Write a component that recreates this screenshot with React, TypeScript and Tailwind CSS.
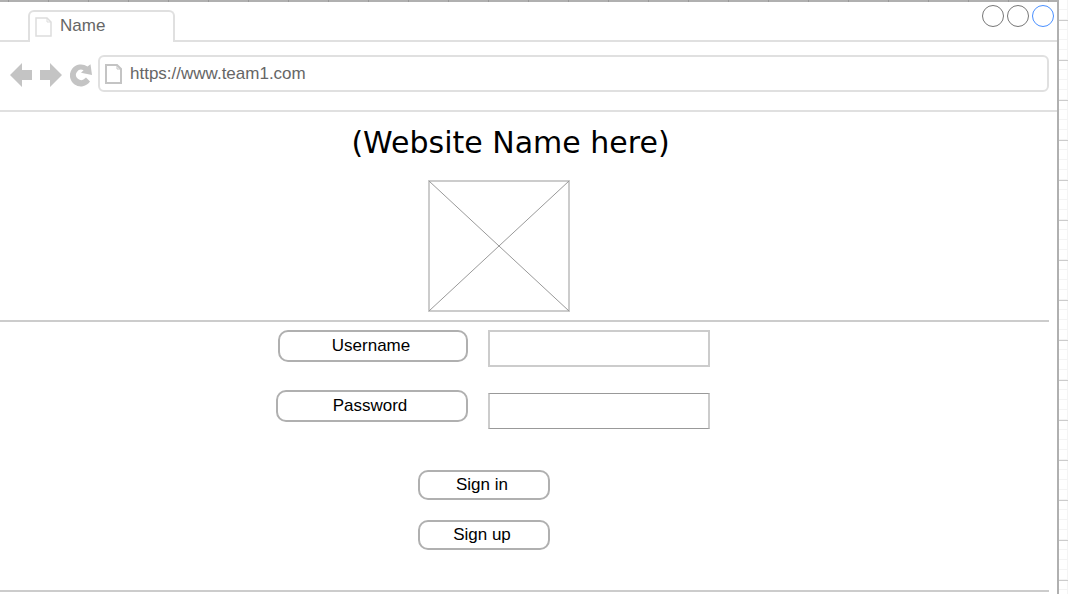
import React from "react";

function PageIcon({ className, strokeWidth }: { className: string; strokeWidth: number }) {
  return (
    <svg className={className} viewBox="0 0 17 20" fill="none" stroke="currentColor" strokeWidth={strokeWidth} aria-hidden="true">
      <path d="M1 1H12L16 5V19H1Z" />
      <path d="M12 1V5H16" strokeWidth="1" />
    </svg>
  );
}

function ArrowIcon({ className = "" }: { className?: string }) {
  return (
    <svg className={className} width="22" height="24" viewBox="0 0 22 24" fill="currentColor" aria-hidden="true">
      <path d="M0 12L12 0V7H22V17H12V24Z" />
    </svg>
  );
}

function ReloadIcon() {
  return (
    <svg width="22" height="24" viewBox="0 0 22 24" fill="currentColor" aria-hidden="true">
      <path d="M17.5 3.6L20.5 1.2L22 12L11 9.8L13.6 7.2A5.2 5.2 0 1 0 14.8 15.6L16 14.4L20 18.6A11 11 0 1 1 17.5 3.6Z" />
    </svg>
  );
}

const windowButtons = [
  { label: "Minimize", border: "border-[#777777]" },
  { label: "Maximize", border: "border-[#777777]" },
  { label: "Close", border: "border-[#4a90ff]" },
];

const labelStyle =
  "flex h-8 items-center justify-center rounded-[10px] border-2 border-[#b0b0b0] pr-1 text-[17px] leading-5 text-black";
const buttonStyle =
  "flex h-[30px] w-33 items-center justify-center rounded-[10px] border-2 border-[#b0b0b0] pr-1 pb-px text-[17px] leading-5 text-black";

export default function App() {
  return (
    <div className="flex min-h-screen bg-white font-['Liberation_Sans',Arial,sans-serif]">
      <div className="flex min-w-0 flex-1 flex-col border-r-2 border-[#b0b0b0]">
        <div className="h-0.5 bg-[#b0b0b0] bg-[linear-gradient(to_right,transparent_8px,#999999_8px,#999999_9px,transparent_9px)] bg-[length:40px_2px]" />
        <header>
          <div className="flex h-10">
            <div className="w-7 border-b-2 border-[#e0e0e0]" />
            <div className="mt-2 flex w-[147px] items-center gap-2 rounded-t-md border-2 border-b-0 border-[#e0e0e0] pl-[5px] text-[#666666]">
              <PageIcon className="h-5 w-[17px] text-[#dddddd]" strokeWidth={1.5} />
              <span className="pb-0.5 text-[17px] leading-5">Name</span>
            </div>
            <div className="flex flex-1 justify-end gap-[3px] border-b-2 border-[#e0e0e0] pt-[3px] pr-[3px]">
              {windowButtons.map((b) => (
                <button key={b.label} type="button" aria-label={b.label} className={`size-[22px] rounded-full border ${b.border}`} />
              ))}
            </div>
          </div>
          <div className="flex items-center gap-2 border-b-2 border-[#e0e0e0] pt-[13px] pr-2 pb-[18px] pl-2.5 text-[#c4c4c4]">
            <button type="button" aria-label="Back" className="pt-0.5"><ArrowIcon /></button>
            <button type="button" aria-label="Forward" className="pt-0.5"><ArrowIcon className="rotate-180" /></button>
            <button type="button" aria-label="Reload" className="pt-0.5"><ReloadIcon /></button>
            <div className="-ml-0.5 flex h-[37px] min-w-0 flex-1 items-center gap-2 rounded-md border-2 border-[#e0e0e0] pl-[5px]">
              <PageIcon className="h-5 w-[17px] shrink-0" strokeWidth={2} />
              <input
                type="text"
                aria-label="Address"
                defaultValue="https://www.team1.com"
                className="min-w-0 flex-1 text-[17px] leading-5 text-[#666666] outline-none"
              />
            </div>
          </div>
        </header>

        <main>
          <section className="mr-2 flex flex-col items-center border-b-2 border-[#cccccc] pt-[13px] pb-2">
            <h1 className="pr-7 font-['DejaVu_Sans',Verdana,sans-serif] text-[30px] leading-9 text-black">
              (Website Name here)
            </h1>
            <div className="pt-[19px] pr-[51px]">
              <svg className="h-[132px] w-[142px]" viewBox="0 0 142 132" fill="none" role="img" aria-label="Logo placeholder">
                <rect x="1" y="1" width="140" height="130" stroke="#cccccc" strokeWidth="2" />
                <path d="M1 1L141 131M141 1L1 131" stroke="#999999" />
              </svg>
            </div>
          </section>

          <form className="mr-2 flex flex-col items-center border-b-2 border-[#cccccc] pt-2 pb-10" onSubmit={(e) => e.preventDefault()}>
            <div className="grid grid-cols-[192px_222px] gap-x-5 gap-y-[23px] pr-[63px]">
              <label htmlFor="username" className={`${labelStyle} ml-0.5`}>Username</label>
              <input id="username" type="text" className="h-[37px] border-2 border-[#cccccc] px-2 outline-none" />
              <label htmlFor="password" className={labelStyle}>Password</label>
              <input id="password" type="password" className="mt-[3px] h-9 border-x-2 border-y border-x-[#cccccc] border-y-[#999999] px-2 outline-none" />
            </div>
            <div className="flex flex-col gap-5 pt-[41px] pr-[81px]">
              <button type="submit" className={buttonStyle}>Sign in</button>
              <button type="button" className={buttonStyle}>Sign up</button>
            </div>
          </form>
        </main>
      </div>
      <div className="w-[9px] bg-[linear-gradient(to_bottom,transparent_20px,#cccccc_20px,#cccccc_21px,transparent_21px),linear-gradient(to_bottom,transparent_9px,#f4f4f4_9px,#f4f4f4_11px,transparent_11px),linear-gradient(to_right,transparent_8px,#f4f4f4_8px)] bg-[length:100%_40px,100%_10px,100%_100%]" />
    </div>
  );
}
